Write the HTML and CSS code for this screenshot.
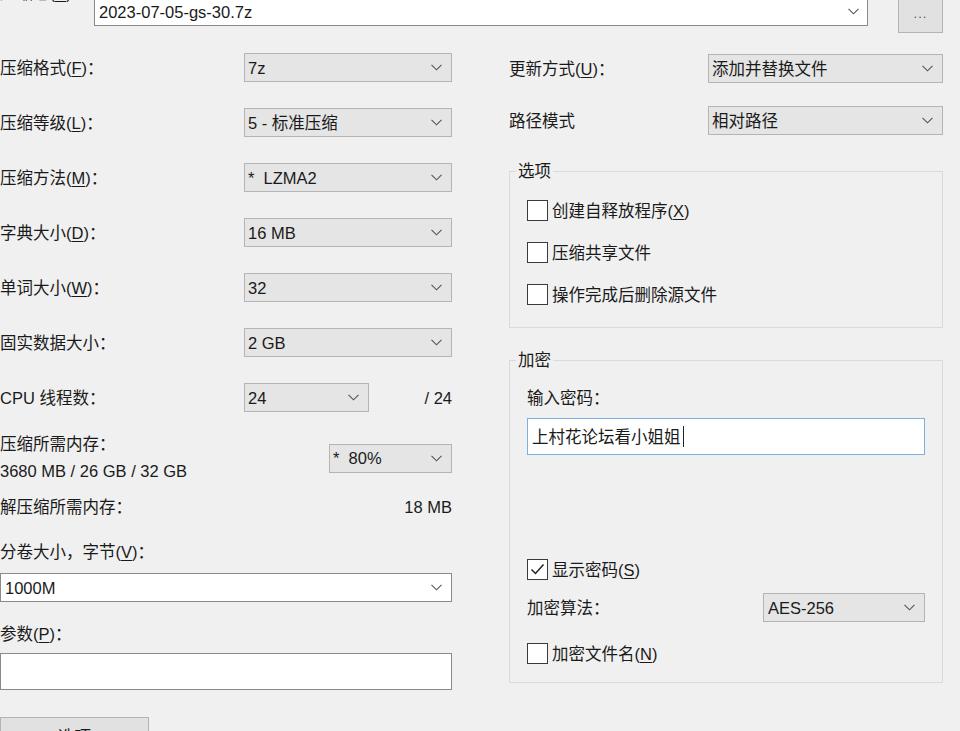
FILE: index.html
```html
<!DOCTYPE html>
<html lang="zh-CN">
<head>
<meta charset="utf-8">
<title>添加到压缩包</title>
<link rel="stylesheet" href="styles.css">
</head>
<body>
<div class="page">
  <div class="top">
    <div class="top-label">压缩包(<u>A</u>)：</div>
    <div class="select white wide">
      <span>2023-07-05-gs-30.7z</span>
      <svg class="chev" width="11" height="7" viewBox="0 0 11 7"><path d="M0.5 0.8 L5.5 5.8 L10.5 0.8" fill="none" stroke="#555" stroke-width="1.1"/></svg>
    </div>
    <div class="btn dots">...</div>
  </div>

  <div class="main">
    <div class="left">
      <div class="row">
        <span class="lbl">压缩格式(<u>F</u>)：</span>
        <div class="select"><span>7z</span><svg class="chev" width="11" height="7" viewBox="0 0 11 7"><path d="M0.5 0.8 L5.5 5.8 L10.5 0.8" fill="none" stroke="#555" stroke-width="1.1"/></svg></div>
      </div>
      <div class="row">
        <span class="lbl">压缩等级(<u>L</u>)：</span>
        <div class="select"><span>5 - 标准压缩</span><svg class="chev" width="11" height="7" viewBox="0 0 11 7"><path d="M0.5 0.8 L5.5 5.8 L10.5 0.8" fill="none" stroke="#555" stroke-width="1.1"/></svg></div>
      </div>
      <div class="row">
        <span class="lbl">压缩方法(<u>M</u>)：</span>
        <div class="select"><span>*&nbsp; LZMA2</span><svg class="chev" width="11" height="7" viewBox="0 0 11 7"><path d="M0.5 0.8 L5.5 5.8 L10.5 0.8" fill="none" stroke="#555" stroke-width="1.1"/></svg></div>
      </div>
      <div class="row">
        <span class="lbl">字典大小(<u>D</u>)：</span>
        <div class="select"><span>16 MB</span><svg class="chev" width="11" height="7" viewBox="0 0 11 7"><path d="M0.5 0.8 L5.5 5.8 L10.5 0.8" fill="none" stroke="#555" stroke-width="1.1"/></svg></div>
      </div>
      <div class="row">
        <span class="lbl">单词大小(<u>W</u>)：</span>
        <div class="select"><span>32</span><svg class="chev" width="11" height="7" viewBox="0 0 11 7"><path d="M0.5 0.8 L5.5 5.8 L10.5 0.8" fill="none" stroke="#555" stroke-width="1.1"/></svg></div>
      </div>
      <div class="row">
        <span class="lbl">固实数据大小：</span>
        <div class="select"><span>2 GB</span><svg class="chev" width="11" height="7" viewBox="0 0 11 7"><path d="M0.5 0.8 L5.5 5.8 L10.5 0.8" fill="none" stroke="#555" stroke-width="1.1"/></svg></div>
      </div>
      <div class="row cpu">
        <span class="lbl">CPU 线程数：</span>
        <div class="select short"><span>24</span><svg class="chev" width="11" height="7" viewBox="0 0 11 7"><path d="M0.5 0.8 L5.5 5.8 L10.5 0.8" fill="none" stroke="#555" stroke-width="1.1"/></svg></div>
        <span class="val">/ 24</span>
      </div>
      <div class="mem">
        <div class="mem-text">
          <div>压缩所需内存：</div>
          <div>3680 MB / 26 GB / 32 GB</div>
        </div>
        <div class="select pct"><span>*&nbsp; 80%</span><svg class="chev" width="11" height="7" viewBox="0 0 11 7"><path d="M0.5 0.8 L5.5 5.8 L10.5 0.8" fill="none" stroke="#555" stroke-width="1.1"/></svg></div>
      </div>
      <div class="line unmem"><span>解压缩所需内存：</span><span>18 MB</span></div>
      <div class="line vol-lbl">分卷大小，字节(<u>V</u>)：</div>
      <div class="select white full"><span>1000M</span><svg class="chev" width="11" height="7" viewBox="0 0 11 7"><path d="M0.5 0.8 L5.5 5.8 L10.5 0.8" fill="none" stroke="#555" stroke-width="1.1"/></svg></div>
      <div class="line par-lbl">参数(<u>P</u>)：</div>
      <div class="textbox"></div>
      <div class="btn opt">选项</div>
    </div>

    <div class="right">
      <div class="row r1">
        <span class="lbl">更新方式(<u>U</u>)：</span>
        <div class="select rsel"><span>添加并替换文件</span><svg class="chev" width="11" height="7" viewBox="0 0 11 7"><path d="M0.5 0.8 L5.5 5.8 L10.5 0.8" fill="none" stroke="#555" stroke-width="1.1"/></svg></div>
      </div>
      <div class="row r2">
        <span class="lbl">路径模式</span>
        <div class="select rsel"><span>相对路径</span><svg class="chev" width="11" height="7" viewBox="0 0 11 7"><path d="M0.5 0.8 L5.5 5.8 L10.5 0.8" fill="none" stroke="#555" stroke-width="1.1"/></svg></div>
      </div>

      <fieldset class="group opts">
        <legend>选项</legend>
        <div class="check first"><span class="box"></span><span>创建自释放程序(<u>X</u>)</span></div>
        <div class="check"><span class="box"></span><span>压缩共享文件</span></div>
        <div class="check"><span class="box"></span><span>操作完成后删除源文件</span></div>
      </fieldset>

      <fieldset class="group enc">
        <legend>加密</legend>
        <div class="line pw-lbl">输入密码：</div>
        <div class="pwbox"><span class="pw">上村花论坛看小姐姐</span><span class="caret"></span></div>
        <div class="check show"><span class="box"><svg width="19" height="19" viewBox="0 0 19 19"><path d="M3.5 9.5 L7.5 13.5 L15.5 4.5" fill="none" stroke="#222" stroke-width="1.5"/></svg></span><span>显示密码(<u>S</u>)</span></div>
        <div class="row alg">
          <span class="lbl">加密算法：</span>
          <div class="select asel"><span>AES-256</span><svg class="chev" width="11" height="7" viewBox="0 0 11 7"><path d="M0.5 0.8 L5.5 5.8 L10.5 0.8" fill="none" stroke="#555" stroke-width="1.1"/></svg></div>
        </div>
        <div class="check encname"><span class="box"></span><span>加密文件名(<u>N</u>)</span></div>
      </fieldset>
    </div>
  </div>
</div>
</body>
</html>
```

FILE: styles.css
```css
html, body {
  margin: 0;
  padding: 0;
  background: #f0f0f0;
}
body {
  width: 960px;
  height: 731px;
  overflow: hidden;
  font-family: "Liberation Sans", "Noto Sans CJK SC", sans-serif;
  font-size: 16.5px;
  line-height: 20px;
  color: #1a1a1a;
}
u { text-underline-offset: 2px; }

.page { width: 960px; }

/* top row */
.top {
  display: flex;
  align-items: flex-start;
  margin-top: -3px;
  height: 36px;
}
.top-label {
  width: 94px;
  margin-top: -14px;
  flex: 0 0 94px;
  white-space: nowrap;
  overflow: hidden;
}
.select {
  box-sizing: border-box;
  height: 29px;
  display: flex;
  align-items: center;
  justify-content: space-between;
  padding: 0 9px 0 3px;
  background: #e5e5e5;
  border: 1px solid #b4b4b4;
  white-space: nowrap;
}
.select.white {
  background: #fff;
  border-color: #8a8a8a;
}
.select.wide { width: 774px; padding-right: 8px; padding-left: 4px; }
.chev { flex: 0 0 auto; }
.btn {
  box-sizing: border-box;
  background: #e1e1e1;
  border: 1px solid #b4b4b4;
  display: flex;
  align-items: center;
  justify-content: center;
  color: #555;
}
.dots {
  width: 45px;
  height: 36px;
  margin-left: 30px;
  font-size: 13px;
  letter-spacing: 1px;
  padding-bottom: 2px;
}

/* main */
.main {
  display: flex;
  margin-top: 20px;
}
.left {
  width: 452px;
  display: flex;
  flex-direction: column;
}
.row {
  display: flex;
  align-items: center;
  height: 29px;
  margin-bottom: 26px;
}
.lbl {
  flex: 1 1 auto;
  white-space: nowrap;
}
.left .lbl { flex: 0 0 244px; }
.left .select { flex: 1 1 auto; }
.left .select.short { flex: 0 0 125px; width: 125px; }
.val { margin-left: auto; white-space: nowrap; }
.row.cpu { margin-bottom: 19px; }

.mem {
  display: flex;
  align-items: center;
  justify-content: space-between;
  height: 54px;
}
.mem-text { line-height: 27px; white-space: nowrap; }
.select.pct { width: 123px; flex: 0 0 123px; }

.line { white-space: nowrap; }
.unmem {
  display: flex;
  justify-content: space-between;
  margin-top: 12px;
}
.vol-lbl { margin-top: 25px; }
.select.full { margin-top: 11px; flex: 0 0 29px; padding-left: 4px; }
.par-lbl { margin-top: 22px; }
.textbox {
  box-sizing: border-box;
  height: 37px;
  margin-top: 9px;
  background: #fff;
  border: 1px solid #8a8a8a;
}
.opt {
  width: 149px;
  height: 30px;
  margin-top: 27px;
  color: #1a1a1a;
  align-items: flex-start;
  padding-top: 9px;
}

/* right */
.right {
  width: 434px;
  margin-left: 57px;
  padding-top: 1px;
  display: flex;
  flex-direction: column;
}
.select.rsel { width: 235px; flex: 0 0 235px; }
.row.r1 { margin-bottom: 23px; }
.row.r2 { margin-bottom: 26px; }

.group {
  margin: 0;
  border: 1px solid #dadada;
  padding: 0 17px 0 17px;
  min-width: 0;
}
.group legend {
  padding: 0 2px;
  margin-left: -11px;
  line-height: 20px;
}
.opts { padding-bottom: 22px; }
.enc { margin-top: 22px; padding-bottom: 18px; }

.check {
  display: flex;
  align-items: center;
  height: 21px;
  margin-top: 21px;
  white-space: nowrap;
}
.check.first { margin-top: 19px; }
.box {
  box-sizing: border-box;
  width: 21px;
  height: 21px;
  flex: 0 0 21px;
  border: 1px solid #3a3a3a;
  background: #fff;
  margin-right: 4px;
  display: flex;
  align-items: center;
  justify-content: center;
}
.pw-lbl { margin-top: 18px; }
.pwbox {
  box-sizing: border-box;
  height: 37px;
  margin-top: 10px;
  background: #fff;
  border: 1px solid #7ab0e4;
  display: flex;
  align-items: center;
  padding-left: 4px;
}
.caret {
  display: inline-block;
  width: 1px;
  height: 21px;
  background: #222;
  margin-left: 2px;
}
.check.show { margin-top: 104px; }
.row.alg { margin-top: 13px; margin-bottom: 0; }
.select.asel { width: 162px; flex: 0 0 162px; padding-left: 4px; }
.check.encname { margin-top: 21px; }
```
